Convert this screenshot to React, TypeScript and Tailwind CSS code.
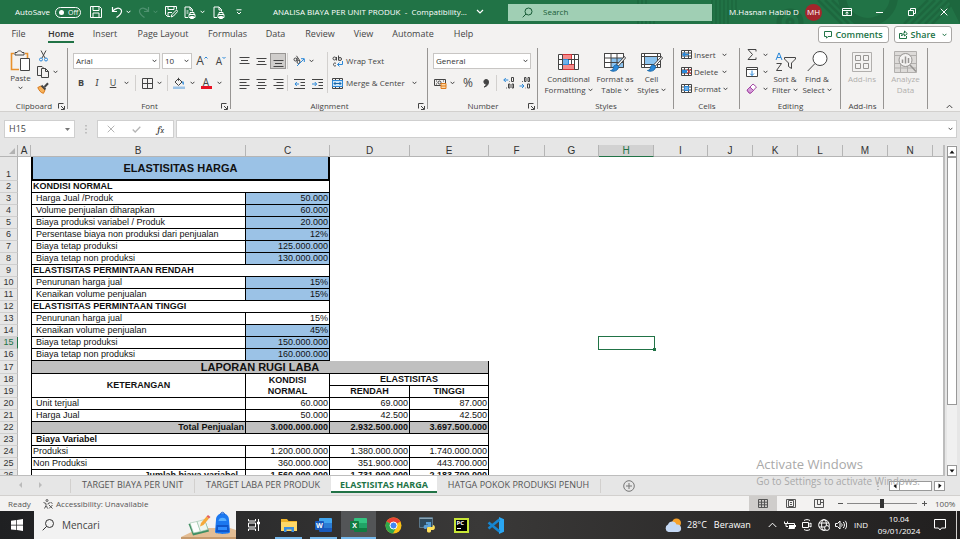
import { useState, type ReactNode } from "react";
import clsx from "clsx";

/* ---------- drawing helpers ---------- */

function Glyph({ w, h, children, className }: { w: number; h: number; children: ReactNode; className?: string }) {
  return (
    <svg width={w} height={h} viewBox={`0 0 ${w} ${h}`} fill="none" stroke="currentColor" className={clsx("shrink-0", className)} aria-hidden="true">
      {children}
    </svg>
  );
}

const Chevron = ({ className }: { className?: string }) => (
  <Glyph w={5} h={4} className={className}>
    <path d="M.6 .8 2.5 2.8 4.4 .8" />
  </Glyph>
);

function Tool({ label, className, children }: { label: string; className: string; children: ReactNode }) {
  return (
    <button type="button" aria-label={label} className={clsx("flex h-4 shrink-0 items-center justify-center", className)}>
      {children}
    </button>
  );
}

const More = ({ label, className = "w-[10px]" }: { label: string; className?: string }) => (
  <Tool label={label} className={className}>
    <Chevron />
  </Tool>
);

const Rule = ({ className }: { className?: string }) => <span className={clsx("w-px shrink-0 bg-[#d2d0ce]", className)} />;

/* ---------- title bar ---------- */

function TitleArt() {
  return (
    <svg className="absolute inset-y-0 right-0 h-full w-[460px]" viewBox="0 0 460 24" fill="none" stroke="#1d673e" aria-hidden="true">
      <path d="M138 0V24M142 0V24M146 0V24M150 20V24M154 20V24" strokeWidth="1.4" />
      <path d="M212 0V24M216 0V24M220 0V24M224 0V24M228 0V24M232 0V12M236 0V10" strokeWidth="1.4" />
      <circle cx="290" cy="22" r="11" strokeWidth="5" />
      <circle cx="290" cy="22" r="3" strokeWidth="3" />
      <path d="M318 0 342 24M325 0 349 24M332 0 356 24M339 0 360 21" strokeWidth="2.5" />
      <circle cx="368" cy="-4" r="26" strokeWidth="8" />
      <path d="M404 24 428 0M411 24 435 0M418 24 442 0M425 24 449 0M432 24 456 0" strokeWidth="2.5" />
      <path d="M448 0h12v24z" fill="#1d673e" stroke="none" />
    </svg>
  );
}

function TitleBar() {
  const [auto, setAuto] = useState(false);
  return (
    <header className="relative flex h-6 shrink-0 items-center bg-[#217346] text-[8px] text-white">
      <TitleArt />
      <div className="relative flex flex-1 items-center">
        <label className="flex items-center pl-[15px]">
          <span className="w-10 whitespace-nowrap">AutoSave</span>
          <input type="checkbox" className="sr-only" checked={auto} onChange={() => setAuto(!auto)} />
          <span className="flex h-[11px] w-[26px] items-center gap-1 rounded-full border border-white pl-[3px] text-[7px] leading-none">
            <i className="size-[5px] rounded-full bg-white" />
            {auto ? "On" : "Off"}
          </span>
        </label>
        <Tool label="Save" className="w-[30px]">
          <Glyph w={12} h={12}>
            <path d="M.5 .5h9l2 2v9h-11zM3 .5v4h6v-4M3 11.500v-4.500h6v4.500" />
          </Glyph>
        </Tool>
        <Tool label="Undo" className="w-3">
          <Glyph w={12} h={12}>
            <path d="M1.500 1v4.500h4.500M1.800 5.200C4 2 8 1.200 10 3.500 12 6.500 9 9 5.500 11.500" strokeWidth="1.200" />
          </Glyph>
        </Tool>
        <More label="Undo history" />
        <Tool label="Redo" className="ml-[2px] w-[18px] text-[#4f9270]">
          <Glyph w={12} h={12}>
            <path d="M10.500 1v4.500H6M10.200 5.200C8 2 4 1.200 2 3.500 0 6.500 3 9 6.500 11.500" strokeWidth="1.200" />
          </Glyph>
        </Tool>
        <span className="flex w-[6px] text-[#4f9270]">
          <Chevron />
        </span>
        <Tool label="Save as" className="w-6">
          <Glyph w={13} h={12}>
            <path d="M5 10.500H2.500l-2-2v-8h11v3M3 .5v3h6v-3M3 10.500v-4h4M6 11l1-2.500 4.500-4.500 1.300 1.300L8.500 10z" />
          </Glyph>
        </Tool>
        <Tool label="Quick print" className="w-[14px]">
          <Glyph w={12} h={13}>
            <path d="M4 11.500H1V1h5l2.500 2.500v2M6 1v3h2.500M2.500 5h2M2.500 7h2M5 8.500h6v3H5zM6 8.500v-2h4v2M6.500 10.500h3v2h-3z" />
          </Glyph>
        </Tool>
        <More label="Print options" />
        <Tool label="Print preview" className="w-6">
          <Glyph w={12} h={13}>
            <path d="M4 11.500H1V1h5l2.500 2.500v2M6 1v3h2.500M5 8.500h6v3H5zM6 8.500v-2h4v2M6.500 10.500h3v2h-3z" />
          </Glyph>
        </Tool>
        <Tool label="Customize quick access toolbar" className="w-4">
          <Glyph w={6} h={6}>
            <path d="M.5 .8h5M1 3l2 2 2-2" />
          </Glyph>
        </Tool>
        <h1 className="ml-[26px] flex items-center gap-[9px] whitespace-nowrap">
          <span className="whitespace-pre">ANALISA BIAYA PER UNIT PRODUK&nbsp; -&nbsp; Compatibility...</span>
          <Glyph w={8} h={6}>
            <path d="M1 1l3 3 3-3" strokeWidth="1.200" />
          </Glyph>
        </h1>
      </div>
      <label className="relative flex h-[17px] w-[204px] items-center bg-[#a0cfb4] pl-[14px] text-[#185c37]">
        <Glyph w={11} h={11}>
          <circle cx="6.500" cy="4.500" r="3.500" />
          <path d="M4 7 .7 10.300" />
        </Glyph>
        <input type="text" aria-label="Search" placeholder="Search" className="ml-[10px] w-full bg-transparent outline-none placeholder:text-[#185c37]" />
      </label>
      <div className="relative flex w-[248px] items-center">
        <span className="w-[93px] whitespace-nowrap pl-[17px]">M.Hasnan Habib D</span>
        <span className="flex size-[17px] items-center justify-center rounded-full bg-[#a4262c]">MH</span>
        <Tool label="Ribbon display options" className="ml-2 w-[33px]">
          <Glyph w={10} h={8}>
            <path d="M.5 .5h9v7h-9zM.5 2.500h9M5 7V4M3.500 5.200 5 3.800l1.500 1.400" />
          </Glyph>
        </Tool>
        <Tool label="Minimize" className="w-[33px]">
          <Glyph w={7} h={7}>
            <path d="M0 3.500h7" />
          </Glyph>
        </Tool>
        <Tool label="Restore" className="w-8">
          <Glyph w={8} h={8}>
            <path d="M.5 2.500h5v5h-5zM2.500 2V.5h5v5H6" />
          </Glyph>
        </Tool>
        <Tool label="Close" className="w-8">
          <Glyph w={8} h={8}>
            <path d="M.7 .7l6.600 6.600M7.300 .7.7 7.300" />
          </Glyph>
        </Tool>
      </div>
    </header>
  );
}

/* ---------- ribbon tabs ---------- */

const MENU = [
  ["File", "w-[37px]"],
  ["Home", "w-[48px]"],
  ["Insert", "w-[40px]"],
  ["Page Layout", "w-[76px]"],
  ["Formulas", "w-[53px]"],
  ["Data", "w-[43px]"],
  ["Review", "w-[46px]"],
  ["View", "w-[41px]"],
  ["Automate", "w-[58px]"],
  ["Help", "w-[43px]"],
];

function RibbonTabs() {
  return (
    <nav className="flex h-[22px] shrink-0 items-center text-[9px] text-[#444]">
      {MENU.map(([name, width]) => (
        <button key={name} type="button" className={clsx("flex h-full items-start justify-center pt-[3px] whitespace-nowrap", width)}>
          <span className={clsx("border-b-2 leading-[14px]", name === "Home" ? "border-[#217346] font-semibold text-[#333]" : "border-transparent")}>{name}</span>
        </button>
      ))}
      <div className="ml-auto flex gap-[5px] pr-2 pb-px font-semibold text-[#217346]">
        <button type="button" className="flex h-[17px] w-[71px] items-center justify-center gap-[3px] rounded-[3px] border border-[#a9a7a5] bg-white">
          <Glyph w={8} h={8}>
            <path d="M.5 .5h7v5H4L2.500 7.200V5.500h-2z" />
          </Glyph>
          Comments
        </button>
        <button type="button" className="flex h-[17px] w-[58px] items-center justify-center gap-[3px] rounded-[3px] border border-[#a9a7a5] bg-white">
          <Glyph w={9} h={9}>
            <path d="M3 3.500H.5v5h7V6M2.500 6c.3-2 1.500-3 3-3V1L8.300 3.700 5.500 6V4.500C4 4.500 3 5 2.500 6z" />
          </Glyph>
          Share
          <Chevron className="ml-1" />
        </button>
      </div>
    </nav>
  );
}

/* ---------- ribbon groups ---------- */

function Group({ name, width, launcher, children }: { name: string; width: string; launcher?: boolean; children: ReactNode }) {
  return (
    <section aria-label={name || "Analysis"} className={clsx("relative flex shrink-0 flex-col", width)}>
      <div className="flex h-[54px]">{children}</div>
      <div className="flex h-3 items-center justify-center pt-px text-[8px] leading-3 text-[#444]">{name}</div>
      {launcher && (
        <button type="button" aria-label={`${name} settings`} className="absolute right-[3px] bottom-px">
          <Glyph w={7} h={7}>
            <path d="M.5 5.500v-5h5M3 3l3 3M6.500 3v3.500H3" />
          </Glyph>
        </button>
      )}
      <span className="absolute top-[2px] right-0 bottom-[2px] w-px bg-[#979593]" />
    </section>
  );
}

function BigButton({ width, icon, lines, arrow, muted }: { width: string; icon: ReactNode; lines: string[]; arrow?: boolean; muted?: boolean }) {
  return (
    <button type="button" className={clsx("flex shrink-0 flex-col items-center pt-1 text-[8px] leading-[11px] whitespace-nowrap", width, muted && "text-[#b1afad]")}>
      <span className="flex h-[23px] items-center">{icon}</span>
      {lines.map((line, i) => (
        <span key={line} className="flex items-center gap-[2px]">
          {line}
          {arrow && i === lines.length - 1 && <Chevron />}
        </span>
      ))}
    </button>
  );
}

function Combo({ label, value, width }: { label: string; value: string; width: string }) {
  return (
    <label className={clsx("relative flex h-4 shrink-0 items-center", width)}>
      <select aria-label={label} className="h-full w-full appearance-none border border-[#c8c6c4] bg-white pl-[2px] text-[8px] leading-[14px] text-[#333] outline-none">
        <option>{value}</option>
      </select>
      <Chevron className="pointer-events-none absolute right-[3px]" />
    </label>
  );
}

function Lines({ rows }: { rows: string }) {
  return (
    <Glyph w={11} h={11}>
      <path d={rows} />
    </Glyph>
  );
}

function Clipboard() {
  return (
    <Group name="Clipboard" width="w-[68px]" launcher>
      <button type="button" className="ml-1 flex w-[33px] flex-col items-center pt-1 text-[8px] leading-[11px]">
        <Glyph w={21} h={22}>
          <path d="M4 3.500H1.500v16H9M15 3.500h2.500V8" stroke="#e8912d" strokeWidth="1.600" />
          <path d="M5 5V2.500h2C7.300.3 11.700.3 12 2.500h2V5z" fill="#f3f2f1" />
          <path d="M10.500 8.500h9v12h-9z" fill="#fff" />
        </Glyph>
        Paste
        <Chevron className="mt-[3px]" />
      </button>
      <div className="flex flex-col pt-[2px]">
        <Tool label="Cut" className="w-3">
          <Glyph w={9} h={12}>
            <path d="M2 .5l4 7.500M7 .5 3 8" />
            <circle cx="2" cy="9.500" r="1.500" stroke="#2b88d8" />
            <circle cx="7" cy="9.500" r="1.500" stroke="#2b88d8" />
          </Glyph>
        </Tool>
        <div className="flex">
          <Tool label="Copy" className="w-3">
            <Glyph w={12} h={12}>
              <path d="M4 9.500H.5v-9H5l1.500 1.500M4.500 2.500h4l3 3v6h-7zM8.500 2.500v3h3" />
            </Glyph>
          </Tool>
          <More label="Copy options" className="w-[12px]" />
        </div>
        <Tool label="Format painter" className="w-3">
          <Glyph w={12} h={12}>
            <path d="M.8 5.500 4 4l4 4-1.500 3.300C4 11 2 8.500.8 5.500z" fill="#f7b25b" stroke="#d97a1c" />
            <path d="M4.500 3.500l4 4" strokeWidth="1.800" />
            <path d="M7.500 5 11 1.200" strokeWidth="2" />
          </Glyph>
        </Tool>
      </div>
    </Group>
  );
}

function FontGroup() {
  return (
    <Group name="Font" width="w-[163px]" launcher>
      <div className="flex flex-col gap-[6px] pt-[7px] pl-[5px]">
        <div className="flex items-center gap-[2px]">
          <Combo label="Font" value="Arial" width="w-[87px]" />
          <Combo label="Font size" value="10" width="w-[30px]" />
          <Tool label="Increase font size" className="w-[16px] text-[12px]">
            A
            <Glyph w={4} h={11}>
              <path d="M.5 2.500 2 1l1.500 1.500" stroke="#2b88d8" />
            </Glyph>
          </Tool>
          <Tool label="Decrease font size" className="w-[18px] text-[10px]">
            A
            <Glyph w={4} h={10}>
              <path d="M.5 1 2 2.500 3.500 1" stroke="#2b88d8" />
            </Glyph>
          </Tool>
        </div>
        <div className="flex items-center">
          <Tool label="Bold" className="w-4 text-[9px] font-bold">B</Tool>
          <Tool label="Italic" className="w-4 font-serif text-[10px] italic">I</Tool>
          <Tool label="Underline" className="w-4 text-[9px] underline">U</Tool>
          <More label="Underline styles" />
          <Rule className="mx-1 h-4" />
          <Tool label="Borders" className="w-[14px]">
            <Glyph w={11} h={11}>
              <path d="M.5 .5h10v10H.5zM5.500 .5v10M.5 5.500h10" />
            </Glyph>
          </Tool>
          <More label="Border styles" />
          <Rule className="mx-[3px] h-4" />
          <Tool label="Fill color" className="w-4">
            <Glyph w={12} h={12}>
              <path d="M5.500 .8v3M2 5l3.500-3.500L9 5 5.500 8.500z" />
              <path d="M9.500 4.500c1 1.500 1 2.500.5 3" stroke="#2b88d8" strokeWidth="1.500" />
              <path d="M0 9.500h12V12H0z" fill="#9bc2e6" stroke="none" />
            </Glyph>
          </Tool>
          <More label="Fill colors" />
          <Tool label="Font color" className="w-[18px]">
            <span className="flex h-3 w-[11px] items-center justify-center border-b-3 border-[#e81123] text-[10px] leading-none">A</span>
          </Tool>
          <More label="Font colors" className="w-2" />
        </div>
      </div>
    </Group>
  );
}

function Alignment() {
  return (
    <Group name="Alignment" width="w-[197px]" launcher>
      <div className="flex w-24 flex-col gap-[6px] pt-[7px] pl-[5px]">
        <div className="flex items-center">
          <Tool label="Top align" className="w-[17px]"><Lines rows="M.5 1.500h10M2 4.500h7M.5 7.500h10" /></Tool>
          <Tool label="Middle align" className="w-[17px]"><Lines rows="M.5 2.500h10M2 5.500h7M.5 8.500h10" /></Tool>
          <Tool label="Bottom align" className="w-[16px] border border-[#979593] bg-[#cfcdcb]"><Lines rows="M.5 4.500h10M2 7.500h7M.5 10.500h10" /></Tool>
          <Rule className="mx-px h-4" />
          <Tool label="Orientation" className="w-5">
            <Glyph w={12} h={12}>
              <circle cx="2.500" cy="4.500" r="1.500" />
              <circle cx="5.500" cy="7" r="1.500" />
              <path d="M4 3v3M3.500 .8 7 6" />
              <path d="M4 11 11 4M8 3.700h3.300V7" stroke="#2b88d8" />
            </Glyph>
          </Tool>
          <More label="Orientation options" className="w-1" />
        </div>
        <div className="flex items-center">
          <Tool label="Align left" className="w-[17px]"><Lines rows="M.5 1.500h10M.5 4.500h7M.5 7.500h10M.5 10.500h7" /></Tool>
          <Tool label="Center" className="w-[17px]"><Lines rows="M.5 1.500h10M2 4.500h7M.5 7.500h10M2 10.500h7" /></Tool>
          <Tool label="Align right" className="w-[16px]"><Lines rows="M.5 1.500h10M3.500 4.500h7M.5 7.500h10M3.500 10.500h7" /></Tool>
          <Rule className="mx-px h-4" />
          <Tool label="Decrease indent" className="w-5">
            <Glyph w={11} h={11}>
              <path d="M0 1.500h11M6.500 4.500H11M6.500 7.500H11M0 10.500h11" />
              <path d="M1 6h4M2.800 4 1 6l1.800 2" stroke="#2b88d8" />
            </Glyph>
          </Tool>
          <Tool label="Increase indent" className="w-4">
            <Glyph w={11} h={11}>
              <path d="M0 1.500h11M6.500 4.500H11M6.500 7.500H11M0 10.500h11" />
              <path d="M0 6h4.500M2.800 4l1.800 2-1.800 2" stroke="#2b88d8" />
            </Glyph>
          </Tool>
        </div>
      </div>
      <Rule className="mt-[6px] h-[41px]" />
      <div className="flex flex-col gap-[6px] pt-[7px] pl-1 text-[8px]">
        <button type="button" className="flex h-4 items-center gap-[3px] whitespace-nowrap">
          <Glyph w={11} h={12}>
            <circle cx="2.500" cy="3.500" r="1.500" />
            <path d="M4.500 2v3.500M6.500 .5v5M4 8.500c-1-1-2.500-.5-2.500 1s1.500 2 2.500 1" />
            <circle cx="8" cy="4" r="1.500" />
            <path d="M10.500 6v3.500h-5M7.500 7.500l-2 2 2 2" stroke="#2b88d8" />
          </Glyph>
          Wrap Text
        </button>
        <div className="flex items-center">
          <button type="button" className="flex h-4 w-[80px] items-center gap-[3px] whitespace-nowrap">
            <Glyph w={11} h={11}>
              <path d="M.5 .5h10v10H.5zM3.500 .5v2M7.500 .5v2M3.500 8.500v2M7.500 8.500v2" />
              <path d="M.5 2.500h10v6H.5z" fill="#cfe6f8" stroke="#2b88d8" />
              <path d="M2 5.500h7M3.500 4 2 5.500 3.500 7M7.500 4 9 5.500 7.500 7" stroke="#1767a8" />
            </Glyph>
            Merge &amp; Center
          </button>
          <Chevron />
        </div>
      </div>
    </Group>
  );
}

function NumberGroup() {
  return (
    <Group name="Number" width="w-[110px]" launcher>
      <div className="flex flex-col gap-[6px] pt-[7px] pl-[5px]">
        <Combo label="Number format" value="General" width="w-[98px]" />
        <div className="flex items-center">
          <Tool label="Accounting format" className="w-[15px]">
            <Glyph w={13} h={11}>
              <path d="M.5 1.500h11v6H.5zM2 3h1M2 6h1M9 3h1" />
              <circle cx="5.500" cy="4.500" r="1.500" />
              <path d="M7 5.500h5v5H7zM7 8h5" fill="#fbd9a8" stroke="#e07b1a" />
            </Glyph>
          </Tool>
          <More label="Accounting formats" className="w-[9px]" />
          <Tool label="Percent" className="w-[22px] text-[12px]">%</Tool>
          <Tool label="Comma style" className="w-[13px]">
            <Glyph w={6} h={9}>
              <path d="M3 .5a2.300 2.300 0 1 0 .3 4.600C3.200 6.500 2.400 7.400 1 8c3-.5 4.500-2.500 4.500-5A2.400 2.400 0 0 0 3 .5z" fill="currentColor" />
            </Glyph>
          </Tool>
          <Rule className="mx-1 h-4" />
          <Tool label="Increase decimal" className="w-4">
            <Glyph w={12} h={12}>
              <path d="M.8 3h4.500M2.800 1 .8 3l2 2" stroke="#2b88d8" />
              <path d="M8.500 .5h2v4h-2zM5.500 7h1.500v4H5.500zM9 7h1.500v4H9zM6.500 4.500h.5M3 11h.8" />
            </Glyph>
          </Tool>
          <Tool label="Decrease decimal" className="w-4">
            <Glyph w={12} h={12}>
              <path d="M.5 9h4.500M3 7l2 2-2 2" stroke="#2b88d8" />
              <path d="M5.500 .5h1.500v4H5.500zM9 .5h1.500v4H9zM8.500 7h2v4h-2zM3 4.500h.8M6.500 11h.5" />
            </Glyph>
          </Tool>
        </div>
      </div>
    </Group>
  );
}

const brush = (
  <>
    <path d="M20.500 4.500 13 12.500l1.500 1.500L21.500 6z" fill="#fff" />
    <path d="M13 13c-2-.5-3.500 1-3.500 2.500S8 18.500 6.500 18.500c3 1.500 8 .5 8-4z" fill="#2b88d8" stroke="#1767a8" />
  </>
);

function Styles() {
  return (
    <Group name="Styles" width="w-[136px]">
      <BigButton
        width="ml-1 w-[53px]"
        lines={["Conditional", "Formatting"]}
        arrow
        icon={
          <Glyph w={21} h={18}>
            <path d="M.5 1.500h20v15H.5z" fill="#fff" />
            <path d="M4.500 1.500h9v5h-9zM4.500 11.500h12v5h-12z" fill="#f58a8a" stroke="#d13438" />
            <path d="M4.500 6.500h6v5h-6z" fill="#6fb2ea" stroke="#2b88d8" />
            <path d="M.5 6.500h4M10 6.500h10.500M.5 11.500h4M4.500 1.500v15M16.500 1.500v15M13.500 6.500v5" />
          </Glyph>
        }
      />
      <BigButton
        width="w-[40px]"
        lines={["Format as", "Table"]}
        arrow
        icon={
          <Glyph w={22} h={20}>
            <path d="M.5 1.500h19v14H.5z" fill="#fff" />
            <path d="M7 6h12.500v9.500H7z" fill="#8cc4f0" stroke="none" />
            <path d="M.5 1.500h19v14H.5zM.5 6h19M.5 10.500h19M7 1.500v14M13 1.500v14" />
            {brush}
          </Glyph>
        }
      />
      <BigButton
        width="w-[33px]"
        lines={["Cell", "Styles"]}
        arrow
        icon={
          <Glyph w={22} h={20}>
            <path d="M.5 1.500h19v14H.5z" fill="#fff" />
            <path d="M3.500 4.500h13v8h-13z" fill="#8cc4f0" />
            <path d="M3.500 1.500v14M16.500 1.500v14M.5 4.500h19M.5 12.500h19" />
            {brush}
          </Glyph>
        }
      />
    </Group>
  );
}

function Cells() {
  const grid = "M.5 1.500h10v8H.5zM3.500 1.500v8M7.500 1.500v8M.5 4h10M.5 7h10";
  const items: [string, ReactNode][] = [
    ["Insert", <path key="i" d="M2 5.500h6M4 3.500l-2 2 2 2" stroke="#2b88d8" strokeWidth="1.500" />],
    ["Delete", <g key="d"><path d="M1 4h5v3H1z" fill="#2b88d8" stroke="none" /><path d="M6 3l4 5M10 3 6 8" stroke="#d13438" /></g>],
    ["Format", <path key="f" d="M3.500 3.500h4v4h-4z" fill="#6fb2ea" stroke="#2b88d8" />],
  ];
  return (
    <Group name="Cells" width="w-[66px]">
      <div className="flex flex-col pl-[7px] text-[8px]">
        {items.map(([name, mark]) => (
          <button key={name} type="button" className="flex h-[17px] items-center gap-[2px]">
            <Glyph w={11} h={11}>
              <path d={grid} fill="#fff" />
              {mark}
            </Glyph>
            <span className="min-w-[26px] text-left">{name}</span>
            <Chevron />
          </button>
        ))}
      </div>
    </Group>
  );
}

function Editing() {
  return (
    <Group name="Editing" width="w-[101px]">
      <div className="flex flex-col pl-[6px]">
        <button type="button" aria-label="AutoSum" className="flex h-[17px] items-center gap-[5px]">
          <Glyph w={12} h={11}>
            <path d="M10 2.500v-2H2l4.500 5L2 10.500h8v-2" />
          </Glyph>
          <Chevron />
        </button>
        <button type="button" aria-label="Fill" className="flex h-[17px] items-center gap-[5px]">
          <Glyph w={12} h={10}>
            <path d="M.5 .5h11v9H.5zM.5 2.500h11" fill="#fff" />
            <path d="M6 3.500v5M4 6.500l2 2 2-2" stroke="#2b88d8" />
          </Glyph>
          <Chevron />
        </button>
        <button type="button" aria-label="Clear" className="flex h-[17px] items-center gap-[5px]">
          <Glyph w={12} h={11}>
            <path d="M1 7l6-6 3.500 3L5 10H3z" fill="#fff" stroke="#a349a4" />
            <path d="M1 7l3-3 3.500 3.500L5 10H3z" fill="#d59bd8" stroke="#a349a4" />
          </Glyph>
          <Chevron />
        </button>
      </div>
      <BigButton
        width="w-[34px]"
        lines={["Sort &", "Filter"]}
        arrow
        icon={
          <Glyph w={21} h={20}>
            <path d="M1 8 3.800 1h.4L7 8M2 5.500h4" stroke="#2b88d8" />
            <path d="M1.500 11.500h5l-5 7h5.500M9.500 5.500h11v1.500L16.500 11v5.500l-3-2V11L9.500 7z" />
          </Glyph>
        }
      />
      <BigButton
        width="w-[30px]"
        lines={["Find &", "Select"]}
        arrow
        icon={
          <Glyph w={21} h={21}>
            <circle cx="13" cy="7.500" r="7" fill="#fff" />
            <path d="M8 12.500.7 20" />
          </Glyph>
        }
      />
    </Group>
  );
}

function Ribbon() {
  return (
    <div className="flex h-[66px] shrink-0 border-b border-[#d2d0ce] text-[#444]">
      <Clipboard />
      <FontGroup />
      <Alignment />
      <NumberGroup />
      <Styles />
      <Cells />
      <Editing />
      <Group name="Add-ins" width="w-[43px]">
        <BigButton
          width="w-[42px]"
          lines={["Add-ins"]}
          muted
          icon={
            <Glyph w={20} h={20}>
              <path d="M.5 .5h19v19H.5z" />
              <path d="M3.500 3.500h5v5h-5zM11.500 3.500h5v5h-5zM3.500 11.500h5v5h-5zM11.500 11.500h5v5h-5z" stroke="#979593" />
            </Glyph>
          }
        />
      </Group>
      <Group name="" width="w-[44px]">
        <BigButton
          width="w-[43px]"
          lines={["Analyze", "Data"]}
          muted
          icon={
            <Glyph w={23} h={22}>
              <path d="M.5 .5h22v21H.5z" fill="#dddbd9" />
              <path d="M.5 4.500h22M.5 12.500h22M.5 17h22M6.500 12v9M13.500 15v6" />
              <circle cx="11.500" cy="9" r="6.500" fill="#f3f2f1" stroke="#979593" />
              <path d="M8.500 12V8.500M11.500 12.500V5.500M14.500 12V7M16 14l6 6.500" stroke="#979593" strokeWidth="1.500" />
            </Glyph>
          }
        />
      </Group>
      <button type="button" aria-label="Collapse ribbon" className="mt-auto mr-[7px] mb-[2px] ml-auto">
        <Glyph w={7} h={5}>
          <path d="M.7 4 3.500 1.200 6.300 4" />
        </Glyph>
      </button>
    </div>
  );
}

/* ---------- formula bar ---------- */

function FormulaBar() {
  return (
    <div className="flex h-[33px] shrink-0 items-start pt-2 pr-[3px] pl-1 text-[#555]">
      <label className="relative flex h-[18px] w-[71px] items-center border border-[#cfcfcf] bg-white">
        <input aria-label="Name box" defaultValue="H15" className="w-full bg-transparent pl-1 text-[9px] text-[#444] outline-none" />
        <Glyph w={5} h={3} className="absolute right-1">
          <path d="M0 0h5L2.500 3z" fill="#777" stroke="none" />
        </Glyph>
      </label>
      <span className="flex h-[18px] w-[22px] items-center justify-center">
        <Glyph w={2} h={9}>
          <path d="M1 0v9" strokeDasharray="1.500 2" stroke="#999" />
        </Glyph>
      </span>
      <div className="flex h-[18px] w-[77px] items-center border border-[#cfcfcf] bg-white pl-px">
        <button type="button" aria-label="Cancel" className="flex w-[25px] justify-center">
          <Glyph w={8} h={8}>
            <path d="M.7 .7l6.600 6.600M7.300 .7.7 7.300" stroke="#b5b5b5" />
          </Glyph>
        </button>
        <button type="button" aria-label="Enter" className="flex w-[25px] justify-center">
          <Glyph w={9} h={7}>
            <path d="M.7 3.500 3.200 6 8.300.8" stroke="#b5b5b5" strokeWidth="1.300" />
          </Glyph>
        </button>
        <button type="button" aria-label="Insert function" className="w-[25px] font-serif text-[11px] leading-none text-[#333] italic">
          f<span className="text-[8px]">x</span>
        </button>
      </div>
      <label className="relative ml-[2px] flex h-[18px] flex-1 items-center border border-[#cfcfcf] bg-white">
        <input aria-label="Formula" className="w-full bg-transparent px-1 text-[9px] outline-none" />
        <Chevron className="absolute right-[3px]" />
      </label>
    </div>
  );
}

/* ---------- worksheet ---------- */

const COLS: [string, string][] = [
  ["A", "w-[13px]"],
  ["B", "w-[215px]"],
  ["C", "w-[84px]"],
  ["D", "w-[80px]"],
  ["E", "w-[79px]"],
  ["F", "w-[56px]"],
  ["G", "w-[54px]"],
  ["H", "w-[55px]"],
  ["I", "w-[54px]"],
  ["J", "w-[45px]"],
  ["K", "w-[45px]"],
  ["L", "w-[45px]"],
  ["M", "w-[45px]"],
  ["N", "w-[45px]"],
];

type Cell = { text?: string; span?: number; rows?: number; cls: string };

const line = "border-b border-r border-black";
const first = "border-b border-x border-black";
const label = (text: string): Cell => ({ text, cls: `${first} pl-1 text-left` });
const heading = (text: string): Cell => ({ text, span: 2, cls: `${first} pl-px text-left font-bold` });
const blue = (text: string): Cell => ({ text, cls: `${line} bg-[#9bc2e6] pr-px text-right` });
const value = (text: string): Cell => ({ text, cls: `${line} pr-px text-right` });
const head = (text: string, extra: Partial<Cell> = {}): Cell => ({ text, cls: `${line} text-center font-bold`, ...extra });
const total = (text: string): Cell => ({ text, cls: `${line} bg-[#c0c0c0] pr-px text-right font-bold` });

const ROWS: Cell[][] = [
  [{ text: "ELASTISITAS HARGA", span: 2, cls: "border-2 border-t-0 border-black bg-[#9bc2e6] text-center text-[11px] font-bold" }],
  [heading("KONDISI NORMAL")],
  [label("Harga Jual /Produk"), blue("50.000")],
  [label("Volume penjualan diharapkan"), blue("60.000")],
  [label("Biaya produksi variabel / Produk"), blue("20.000")],
  [label("Persentase biaya non produksi dari penjualan"), blue("12%")],
  [label("Biaya tetap produksi"), blue("125.000.000")],
  [label("Biaya tetap non produksi"), blue("130.000.000")],
  [heading("ELASTISITAS PERMINTAAN RENDAH")],
  [label("Penurunan harga jual"), blue("15%")],
  [label("Kenaikan volume penjualan"), blue("15%")],
  [heading("ELASTISITAS PERMINTAAN TINGGI")],
  [label("Penurunan harga jual"), value("15%")],
  [label("Kenaikan volume penjualan"), blue("45%")],
  [label("Biaya tetap produksi"), blue("150.000.000")],
  [label("Biaya tetap non produksi"), blue("160.000.000")],
  [{ text: "LAPORAN RUGI LABA", span: 4, cls: `${first} bg-[#c0c0c0] text-center text-[11px] font-bold` }],
  [{ text: "KETERANGAN", rows: 2, cls: `${first} text-center font-bold` }, head("KONDISI", { cls: "border-r border-black text-center font-bold" }), head("ELASTISITAS", { span: 2 })],
  [head("NORMAL"), head("RENDAH"), head("TINGGI")],
  [label("Unit terjual"), value("60.000"), value("69.000"), value("87.000")],
  [label("Harga Jual"), value("50.000"), value("42.500"), value("42.500")],
  [{ text: "Total Penjualan", cls: `${first} bg-[#c0c0c0] pr-px text-right font-bold` }, total("3.000.000.000"), total("2.932.500.000"), total("3.697.500.000")],
  [{ text: "Biaya Variabel", span: 4, cls: `${first} pl-1 text-left font-bold` }],
  [{ text: "Produksi", cls: `${first} pl-px text-left` }, value("1.200.000.000"), value("1.380.000.000"), value("1.740.000.000")],
  [{ text: "Non Produksi", cls: `${first} pl-px text-left` }, value("360.000.000"), value("351.900.000"), value("443.700.000")],
  [
    { text: "Jumlah biaya variabel", cls: `${first} pr-[7px] text-right font-bold` },
    { text: "1.560.000.000", cls: `${line} pr-px text-right font-bold` },
    { text: "1.731.900.000", cls: `${line} pr-px text-right font-bold` },
    { text: "2.183.700.000", cls: `${line} pr-px text-right font-bold` },
  ],
];

const isTall = (n: number) => (n === 1 ? "h-6" : n === 17 ? "h-[13px]" : "h-3");

function Sheet() {
  return (
    <div className="min-w-0 flex-1 overflow-hidden border-r-2 border-b border-[#bdbdbd] bg-white">
      <table className="w-full table-fixed border-separate border-spacing-0 font-['Liberation_Sans',Arial,sans-serif] text-[9px] leading-[11px] whitespace-nowrap text-[#111]">
        <thead>
          <tr className="h-3 bg-[#e6e6e6] text-[10px] text-[#333]">
            <th className="w-[18px] border-r border-b border-[#b5b5b5] p-0">
              <Glyph w={6} h={6} className="ml-auto mr-[2px]">
                <path d="M6 0v6H0z" fill="#b2b2b2" stroke="none" />
              </Glyph>
            </th>
            {COLS.map(([name, width]) => (
              <th
                key={name}
                scope="col"
                className={clsx("border-r border-b p-0 text-center font-normal", width, name === "H" ? "border-r-[#b5b5b5] border-b-[#217346] bg-[#d2d2d2] text-[#217346]" : "border-[#b5b5b5]")}
              >
                {name}
              </th>
            ))}
            <th className="border-b border-[#b5b5b5] p-0" />
          </tr>
        </thead>
        <tbody>
          {ROWS.map((cells, i) => {
            const n = i + 1;
            const wide = n < 17;
            return (
              <tr key={n} className={isTall(n)}>
                <th
                  scope="row"
                  className={clsx(
                    "border-r border-b border-b-[#cfcfcf] p-0 text-center align-bottom font-normal",
                    n === 15 ? "border-r-[#217346] bg-[#d2d2d2] text-[#217346]" : "border-r-[#b5b5b5] bg-[#e6e6e6] text-[#333]",
                  )}
                >
                  {n}
                </th>
                <td className="p-0" />
                {cells.map((c, j) => (
                  <td key={j} colSpan={c.span} rowSpan={c.rows} className={clsx("overflow-hidden py-0", !/\bp[lr]-/.test(c.cls) && "px-0", /\bpl-/.test(c.cls) && "pr-0", /\bpr-/.test(c.cls) && "pl-0", c.cls)}>
                    {c.text}
                  </td>
                ))}
                {n === 15 ? (
                  <>
                    <td colSpan={4} className="p-0" />
                    <td className="relative p-0">
                      <span className="absolute -inset-px border border-[#217346]" />
                      <span className="absolute -right-[2px] -bottom-[2px] size-[3px] bg-[#217346]" />
                    </td>
                    <td colSpan={7} className="p-0" />
                  </>
                ) : (
                  <td colSpan={wide ? 12 : 10} className="p-0" />
                )}
              </tr>
            );
          })}
        </tbody>
      </table>
    </div>
  );
}

function Arrow({ d }: { d: string }) {
  return (
    <Glyph w={6} h={6}>
      <path d={d} fill="#111" stroke="none" />
    </Glyph>
  );
}

function VerticalScroll() {
  return (
    <div className="ml-[2px] flex w-[10px] shrink-0 flex-col bg-[#f0f0f0] pt-px">
      <button type="button" aria-label="Scroll up" className="flex h-[11px] items-center justify-center border border-[#999] bg-white">
        <Arrow d="M.5 4.500h5L3 1.500z" />
      </button>
      <div className="flex-[248] border border-[#999] bg-white" />
      <div className="flex-[60]" />
      <button type="button" aria-label="Scroll down" className="flex h-[11px] items-center justify-center border border-[#999] bg-white">
        <Arrow d="M.5 1.500h5L3 4.500z" />
      </button>
    </div>
  );
}

/* ---------- sheet tabs and status bar ---------- */

function SheetTabs() {
  const tab = "flex items-center justify-center whitespace-nowrap";
  return (
    <div className="flex h-[19px] shrink-0 items-start bg-[#e6e6e6] text-[9px] text-[#555]">
      <div className="flex h-[18px] w-[70px] items-center gap-[15px] pl-[18px] text-[#bbb]">
        <Glyph w={5} h={6}>
          <path d="M4 0v6L1 3z" fill="currentColor" stroke="none" />
        </Glyph>
        <Glyph w={5} h={6}>
          <path d="M1 0v6l3-3z" fill="currentColor" stroke="none" />
        </Glyph>
      </div>
      <Rule className="mt-[3px] h-[14px] bg-[#aaa]" />
      <button type="button" className={clsx(tab, "h-[18px] w-[123px]")}>TARGET BIAYA PER UNIT</button>
      <Rule className="mt-[3px] h-[14px] bg-[#aaa]" />
      <button type="button" className={clsx(tab, "h-[18px] w-[136px]")}>TARGET LABA PER PRODUK</button>
      <button type="button" className={clsx(tab, "h-[17px] w-[106px] border-b-2 border-[#217346] bg-white pt-[2px] font-bold text-[#217346]")}>
        ELASTISITAS HARGA
      </button>
      <button type="button" className={clsx(tab, "h-[18px] w-[163px]")}>HATGA POKOK PRODUKSI PENUH</button>
      <Rule className="mt-[3px] h-[14px] bg-[#aaa]" />
      <button type="button" aria-label="New sheet" className="mt-1 ml-[22px]">
        <Glyph w={12} h={12}>
          <circle cx="6" cy="6" r="5.300" stroke="#777" />
          <path d="M3 6h6M6 3v6" stroke="#777" />
        </Glyph>
      </button>
      <div className="mt-[5px] mr-[15px] ml-auto flex h-[10px] items-stretch">
        <Glyph w={2} h={10} className="mr-[10px]">
          <path d="M1 1v8" strokeDasharray="1.500 2" stroke="#888" />
        </Glyph>
        <button type="button" aria-label="Scroll left" className="flex w-[11px] items-center justify-center border border-[#999] bg-white">
          <Arrow d="M4.500 .5v5L1.500 3z" />
        </button>
        <span className="mr-[2px] w-8 border border-l-0 border-[#999] bg-white" />
        <button type="button" aria-label="Scroll right" className="flex w-[11px] items-center justify-center border border-[#999] bg-white">
          <Arrow d="M1.500 .5v5l3-3z" />
        </button>
      </div>
    </div>
  );
}

function StatusBar() {
  return (
    <div className="flex h-4 shrink-0 items-center border-t border-[#d2d0ce] bg-[#f3f2f1] pl-2 text-[8px] text-[#555]">
      <span className="w-[35px]">Ready</span>
      <Glyph w={10} h={10} className="mr-[3px]">
        <circle cx="4" cy="1.500" r="1" />
        <path d="M.5 3.500l2.500 1v2L1.500 9.500M7.500 3.500 5 4.500v1M3.500 7l1 2.500M6 6l3.500 3.500M9.500 6 6 9.500M8 3.500l1.500 1" />
      </Glyph>
      <span>Accessibility: Unavailable</span>
      <div className="ml-auto flex h-full items-center">
        <button type="button" aria-label="Normal view" className="flex h-full w-7 items-center justify-center bg-[#cfcdcb]">
          <Glyph w={10} h={9}>
            <path d="M.5 .5h9v8h-9zM3.500 .5v8M6.500 .5v8M.5 3.200h9M.5 5.800h9" />
          </Glyph>
        </button>
        <button type="button" aria-label="Page layout view" className="flex h-full w-7 items-center justify-center">
          <Glyph w={10} h={9}>
            <path d="M.5 .5h9v8h-9zM2.500 1.500h5v6h-5zM4 3.500h2M4 5.500h2" />
          </Glyph>
        </button>
        <button type="button" aria-label="Page break view" className="flex h-full w-7 items-center justify-center">
          <Glyph w={10} h={9}>
            <path d="M.5 .5h9v8h-9zM3.500 .5v5h3v-5M6.500 5.500v-2h3" />
          </Glyph>
        </button>
        <button type="button" aria-label="Zoom out" className="flex w-[14px] items-center justify-center">
          <Glyph w={5} h={5}><path d="M0 2.500h5" /></Glyph>
        </button>
        <input
          type="range"
          aria-label="Zoom"
          min={10}
          max={190}
          defaultValue={100}
          className="h-[9px] w-[70px] appearance-none bg-transparent [&::-webkit-slider-runnable-track]:h-px [&::-webkit-slider-runnable-track]:bg-[#888] [&::-webkit-slider-thumb]:-mt-1 [&::-webkit-slider-thumb]:h-[9px] [&::-webkit-slider-thumb]:w-1 [&::-webkit-slider-thumb]:appearance-none [&::-webkit-slider-thumb]:bg-[#333]"
        />
        <button type="button" aria-label="Zoom in" className="flex w-[14px] items-center justify-center">
          <Glyph w={5} h={5}><path d="M0 2.500h5M2.500 0v5" /></Glyph>
        </button>
        <span className="w-[29px] pl-[4px]">100%</span>
      </div>
    </div>
  );
}

/* ---------- taskbar ---------- */

function TaskButton({ label, width = "w-[35px]", open, active, children }: { label: string; width?: string; open?: boolean; active?: boolean; children: ReactNode }) {
  return (
    <button type="button" aria-label={label} className={clsx("relative flex h-full shrink-0 items-center justify-center", width, active && "bg-[#535557]")}>
      {children}
      {open && <span className={clsx("absolute bottom-0 h-[2px] bg-[#76b9ed]", active ? "inset-x-0" : "inset-x-1")} />}
    </button>
  );
}

function OfficeIcon({ letter, back, mid, front }: { letter: string; back: string; mid: string; front: string }) {
  return (
    <span className="relative flex">
      <Glyph w={17} h={16}>
        <path d="M5 1h11a1 1 0 0 1 1 1v4H4V2a1 1 0 0 1 1-1z" fill={back} stroke="none" />
        <path d="M4 6h13v5H4z" fill={mid} stroke="none" />
        <path d="M4 11h13v3a1 1 0 0 1-1 1H5a1 1 0 0 1-1-1z" fill={front} stroke="none" />
        <rect y="4" width="9" height="9" rx="1" fill={front} stroke="none" />
      </Glyph>
      <span className="absolute top-1 left-0 w-[9px] text-center text-[7px] leading-[9px] font-bold text-white">{letter}</span>
    </span>
  );
}

function Taskbar() {
  return (
    <footer className="flex h-7 shrink-0 items-center bg-gradient-to-r from-[#1f2022] via-[#3a3938] to-[#211f1f] text-[9px] text-white">
      <TaskButton label="Start" width="w-[34px]">
        <Glyph w={12} h={12}>
          <path d="M0 1.700 5.300 1v4.700H0zM6 .9 12 0v5.700H6zM0 6.400h5.300v4.700L0 10.400zM6 6.400h6V12l-6-.9z" fill="#fff" stroke="none" />
        </Glyph>
      </TaskButton>
      <label className="relative flex h-full w-[202px] items-center overflow-hidden bg-[#f2f2f2] pl-2 text-[#333]">
        <Glyph w={12} h={12}>
          <circle cx="7.500" cy="4.500" r="4" />
          <path d="M4.700 7.300.7 11.300" />
        </Glyph>
        <input type="text" aria-label="Mencari" placeholder="Mencari" className="w-[100px] bg-transparent pl-2 text-[10px] outline-none placeholder:text-[#444]" />
        <svg className="absolute right-0 bottom-0" width="56" height="28" viewBox="0 0 56 28" aria-hidden="true">
          <path d="M1 26 20 17H50L56 19V28H1z" fill="#e3bd94" />
          <path d="M1 26H56V28H1z" fill="#c69a6d" />
          <path d="M8.500 13 13 24.500 29 20.500 25 9z" fill="#3f8f62" />
          <path d="M10 12 17 10.500 20.500 20.500 13.500 22z" fill="#fbfdfb" stroke="#9cc4ab" strokeWidth=".6" />
          <path d="M17 10.500 24.500 8.500 28 18.500 20.500 20.500z" fill="#eef6f0" stroke="#9cc4ab" strokeWidth=".6" />
          <path d="M20 15.500 21 12 26.500 5.500 29 7.500 23.500 14z" fill="#f6a93a" />
          <path d="M26.500 5.500 28 4 30.500 6 29 7.500z" fill="#e4605e" />
          <path d="M36 9C36 0 49 0 49 9L50 21c0 2.500-15 2.500-15 0z" fill="#1b78f0" />
          <path d="M36.500 14h12l.5 7h-13z" fill="#0f56c9" />
          <path d="M38 16h9v3h-9z" fill="#2f8dff" />
          <path d="M40.500 3.500c0-3 4-3 4 0" fill="none" stroke="#0f56c9" />
          <path d="M38.500 10c0-4.500 8-4.500 8 0z" fill="#58b0ff" />
        </svg>
      </label>
      <TaskButton label="Task view">
        <Glyph w={12} h={12}>
          <path d="M.5 0v2h7V0M.5 4h7v4h-7zM.5 12v-2h7v2M10.500 0v12M9.500 3h2v2h-2z" />
        </Glyph>
      </TaskButton>
      <TaskButton label="File Explorer" open>
        <Glyph w={16} h={14}>
          <path d="M0 1h6l1.500 2H16v10H0z" fill="#f0b429" stroke="none" />
          <path d="M0 4h16v9H0z" fill="#ffd968" stroke="none" />
          <path d="M3 14V9h10v5h-2.500v-2.500h-5V14z" fill="#3b8fe0" stroke="none" />
        </Glyph>
      </TaskButton>
      <TaskButton label="Word" open>
        <OfficeIcon letter="W" back="#41a5ee" mid="#2b7cd3" front="#185abd" />
      </TaskButton>
      <TaskButton label="Excel" open active>
        <OfficeIcon letter="X" back="#33c481" mid="#21a366" front="#107c41" />
      </TaskButton>
      <TaskButton label="Chrome" width="w-[34px]">
        <Glyph w={17} h={17}>
          <circle cx="8.500" cy="8.500" r="8" fill="#fbc116" stroke="none" />
          <path d="M8.500 8.500 1.600 4.500A8 8 0 0 1 15.400 4.500z" fill="#ea4335" stroke="none" />
          <path d="M8.500 8.500 1.600 4.500A8 8 0 0 0 8 16.500L11.500 10z" fill="#2fa84f" stroke="none" />
          <path d="M8.500 4.500h6.900" stroke="#ea4335" />
          <circle cx="8.500" cy="8.500" r="3.500" fill="#4285f4" stroke="#fff" />
        </Glyph>
      </TaskButton>
      <TaskButton label="Python IDLE" width="w-[34px]">
        <Glyph w={16} h={16}>
          <path d="M.5 .5h13v10H.5z" fill="#2e4a5c" stroke="#5b7688" />
          <path d="M.5 1.500h13" stroke="#8aa3b3" />
          <path d="M7 5h5v5H9c-1 0-1.500 1-1.500 2H6c-1.500 0-2-4 0-4h3V7.500H7z" fill="#5a9fd4" stroke="none" />
          <path d="M14 8c2.500 0 2.500 5 0 5h-2v1c0 2-4 2-4 0v-2.500c0-1 .5-1.500 1.500-1.500h4z" fill="#ffe05c" stroke="none" />
        </Glyph>
      </TaskButton>
      <TaskButton label="PyCharm" width="w-[34px]">
        <span className="flex size-[15px] flex-col items-start border-2 border-[#c8e636] bg-black pl-px text-[6px] leading-[7px] font-bold">
          PC
          <i className="mt-px h-px w-1 bg-white" />
        </span>
      </TaskButton>
      <TaskButton label="Visual Studio Code" width="w-[34px]">
        <Glyph w={17} h={17}>
          <path d="M12 0l5 2.300v12.400L12 17z" fill="#2aa6f2" stroke="none" />
          <path d="M12.500 2.500 1.500 11.500M12.500 14.500 1.500 5.500" stroke="#1685cf" strokeWidth="2.600" />
        </Glyph>
      </TaskButton>

      <div className="ml-auto flex h-full items-center">
        <Glyph w={18} h={15} className="mr-[5px]">
          <circle cx="12.500" cy="5" r="4.500" fill="#f5a12c" stroke="none" />
          <path d="M4.500 14a4 4 0 0 1-.5-7.500 4.500 4.500 0 0 1 8.500 0A3.800 3.800 0 0 1 14 14z" fill="#c5d9f5" stroke="none" />
        </Glyph>
        <span className="w-[77px] whitespace-pre">28°C{"   "}Berawan</span>
        <Tool label="Hidden icons" className="w-[17px]">
          <Glyph w={9} h={6}><path d="M.7 5 4.500 1.200 8.300 5" /></Glyph>
        </Tool>
        <Tool label="Battery" className="w-[17px]">
          <Glyph w={12} h={9}>
            <path d="M3.500 2.500h7v5h-6M11.500 4v2M.5 .5v2h3v-2M2 3v2.500h2" />
            <path d="M5 4h5v3H5z" fill="#fff" stroke="none" />
          </Glyph>
        </Tool>
        <Tool label="Meet now" className="w-[17px]">
          <Glyph w={10} h={12}>
            <path d="M.5 3.500h6v5h-6zM6.500 5.500l2.500-1.500v4L6.500 6.500M2 1.500C4 .3 6 .3 8 1.500M2 10.500c2 1.200 4 1.200 6 0" />
          </Glyph>
        </Tool>
        <Tool label="Network" className="w-[17px]">
          <Glyph w={12} h={12}>
            <circle cx="6" cy="6" r="5.300" />
            <ellipse cx="6" cy="6" rx="2.400" ry="5.300" />
            <path d="M1 4h10M1 8h6" />
            <circle cx="9" cy="9" r="2.400" fill="#222" />
          </Glyph>
        </Tool>
        <Tool label="Volume" className="w-[17px]">
          <Glyph w={12} h={10}>
            <path d="M.5 3.500h2L5 1v8L2.500 6.500h-2zM6.500 3.500c.8 1 .8 2 0 3M8.300 2c1.500 2 1.500 4 0 6M10.200 .8c2 2.600 2 5.800 0 8.400" />
          </Glyph>
        </Tool>
        <span className="w-[25px] pl-[5px] text-[8px]">IND</span>
        <span className="w-[50px] text-center text-[8px] leading-[12px]">
          10.04
          <br />
          09/01/2024
        </span>
        <Tool label="Notifications" className="w-[32px]">
          <Glyph w={12} h={12}>
            <path d="M.5 .5h11v8.500H7.500L6 11 4.500 9H.5z" />
          </Glyph>
        </Tool>
        <Rule className="mr-[3px] h-full bg-[#555]" />
      </div>
    </footer>
  );
}

export default function App() {
  return (
    <div className="relative flex h-screen flex-col overflow-hidden bg-[#e6e6e6] font-['Open_Sans','Noto_Sans',sans-serif] leading-normal">
      <TitleBar />
      <div className="bg-[#f3f2f1]">
        <RibbonTabs />
        <Ribbon />
      </div>
      <FormulaBar />
      <main className="flex min-h-0 flex-1 pr-[3px]">
        <Sheet />
        <VerticalScroll />
      </main>
      <SheetTabs />
      <StatusBar />
      <Taskbar />
      <aside className="pointer-events-none absolute right-10 bottom-[50px] text-[10px] text-[#a9a9a9]">
        <p className="text-[13px] leading-[18px]">Activate Windows</p>
        <p className="leading-[16px]">Go to Settings to activate Windows.</p>
      </aside>
    </div>
  );
}
